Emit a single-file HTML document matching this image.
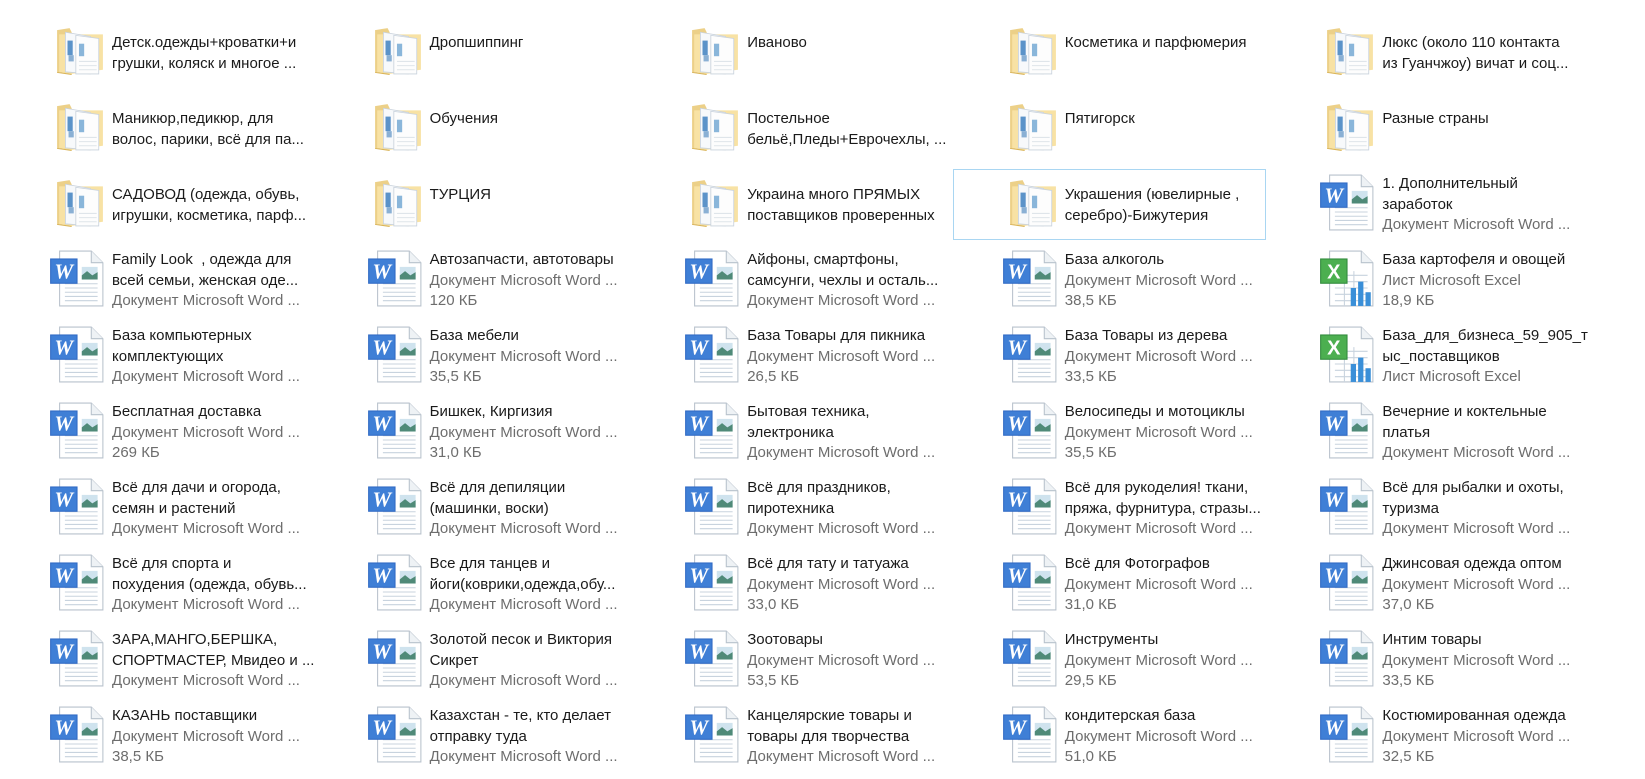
<!DOCTYPE html>
<html><head><meta charset="utf-8">
<style>
body{margin:0;width:1645px;height:779px;background:#fff;overflow:hidden;font-family:"Segoe UI","Liberation Sans","DejaVu Sans",sans-serif;font-size:15px;color:#1a1a1a}
.g{position:absolute;left:0;top:17px;display:grid;grid-template-columns:repeat(5,317.6px);grid-auto-rows:76px}
.c{position:relative}
.c svg{position:absolute}
.f svg{left:55px;top:9px}
.w svg{left:49px;top:5px}
.t{position:absolute;left:112px;line-height:20.5px;white-space:nowrap}
.f .t{top:16px}
.w .t{top:5px}
.s{color:#6d6d6d}
.sel{position:absolute;left:953px;top:169px;width:311px;height:69px;border:1px solid #a9d6f2;background:#fff}
</style></head><body>
<svg width="0" height="0" style="position:absolute">
<defs>
<symbol id="fo" viewBox="0 0 48 48">
<path d="M2 4 L14 2 L16 6 L16 46 L2 44 Z" fill="#ecd088"/>
<path d="M4 8 L46 8 L46 42 L16 46 L4 44 Z" fill="#f8e2a4"/>
<path d="M10 6 L34 10 L34 46 L10 44 Z" fill="#f7f9fb" stroke="#c9d2dc" stroke-width=".8"/>
<path d="M20 9 L42 12 L42 46 L20 46 Z" fill="#fdfdfd" stroke="#c9d2dc" stroke-width=".8"/>
<rect x="12" y="14" width="5" height="14" fill="#5b93c9"/>
<rect x="13" y="28" width="5" height="6" fill="#8ab0d4"/>
<rect x="23" y="17" width="5" height="12" fill="#8ab6da"/>
<path d="M23 34 L40 34 M23 38 L40 38 M23 42 L40 42" stroke="#dfe5ea" stroke-width="1"/>
<path d="M2 44 L16 46 L16 47 L2 45Z" fill="#d9b458"/>
</symbol>
<symbol id="wd" viewBox="0 0 52 54">
<path d="M10 1 L40 1 L51 12 L51 53 L10 53 Z" fill="#fff" stroke="#b8c2cc" stroke-width="1"/>
<path d="M40 1 L40 12 L51 12" fill="#eef2f5" stroke="#b8c2cc" stroke-width="1"/>
<path d="M15 32h31M15 36h31M15 40h31M15 44h31M15 48h31" stroke="#c8d3de" stroke-width="1"/>
<rect x="31" y="16" width="15" height="12" fill="#cfe3ee"/>
<path d="M31 24 L36 20 L41 24 L46 21 L46 28 L31 28Z" fill="#4f8a78"/>
<rect x="1" y="8" width="26" height="24" fill="#2f69c4"/>
<rect x="2" y="9" width="24" height="22" fill="#3f7fd6"/>
<text x="14" y="27" font-family="Liberation Serif" font-style="italic" font-weight="bold" font-size="20" fill="#fff" text-anchor="middle">W</text>
</symbol>
<symbol id="xl" viewBox="0 0 52 54">
<path d="M10 1 L40 1 L51 12 L51 53 L10 53 Z" fill="#fff" stroke="#b8c2cc" stroke-width="1"/>
<path d="M40 1 L40 12 L51 12" fill="#eef2f5" stroke="#b8c2cc" stroke-width="1"/>
<path d="M15 24h31M15 30h31M15 36h31M15 42h31M15 48h31M24 20v33M33 20v33" stroke="#c8d3de" stroke-width="1"/>
<rect x="30" y="36" width="5" height="17" fill="#3a8fd8"/>
<rect x="37" y="30" width="5" height="23" fill="#3a8fd8"/>
<rect x="44" y="40" width="5" height="13" fill="#3a8fd8"/>
<rect x="1" y="8" width="26" height="24" fill="#2f8a3b"/>
<rect x="2" y="9" width="24" height="22" fill="#4caf50"/>
<text x="14" y="27" font-family="Liberation Sans" font-weight="bold" font-size="19" fill="#fff" text-anchor="middle">X</text>
</symbol>
</defs></svg>
<div class="sel"></div>
<div class="g">
<div class="c f"><svg width="50" height="50"><use href="#fo"/></svg><div class="t">Детск.одежды+кроватки+и<br>грушки, коляск и многое ...</div></div>
<div class="c f"><svg width="50" height="50"><use href="#fo"/></svg><div class="t">Дропшиппинг</div></div>
<div class="c f"><svg width="50" height="50"><use href="#fo"/></svg><div class="t">Иваново</div></div>
<div class="c f"><svg width="50" height="50"><use href="#fo"/></svg><div class="t">Косметика и парфюмерия</div></div>
<div class="c f"><svg width="50" height="50"><use href="#fo"/></svg><div class="t">Люкс (около 110 контакта<br>из Гуанчжоу) вичат и соц...</div></div>

<div class="c f"><svg width="50" height="50"><use href="#fo"/></svg><div class="t">Маникюр,педикюр, для<br>волос, парики, всё для па...</div></div>
<div class="c f"><svg width="50" height="50"><use href="#fo"/></svg><div class="t">Обучения</div></div>
<div class="c f"><svg width="50" height="50"><use href="#fo"/></svg><div class="t">Постельное<br>бельё,Пледы+Еврочехлы, ...</div></div>
<div class="c f"><svg width="50" height="50"><use href="#fo"/></svg><div class="t">Пятигорск</div></div>
<div class="c f"><svg width="50" height="50"><use href="#fo"/></svg><div class="t">Разные страны</div></div>

<div class="c f"><svg width="50" height="50"><use href="#fo"/></svg><div class="t">САДОВОД (одежда, обувь,<br>игрушки, косметика, парф...</div></div>
<div class="c f"><svg width="50" height="50"><use href="#fo"/></svg><div class="t">ТУРЦИЯ</div></div>
<div class="c f"><svg width="50" height="50"><use href="#fo"/></svg><div class="t">Украина много ПРЯМЫХ<br>поставщиков проверенных</div></div>
<div class="c f"><svg width="50" height="50"><use href="#fo"/></svg><div class="t">Украшения (ювелирные ,<br>серебро)-Бижутерия</div></div>
<div class="c w"><svg width="55" height="57"><use href="#wd"/></svg><div class="t">1. Дополнительный<br>заработок<br><span class="s">Документ Microsoft Word ...</span></div></div>

<div class="c w"><svg width="55" height="57"><use href="#wd"/></svg><div class="t">Family Look&nbsp; , одежда для<br>всей семьи, женская оде...<br><span class="s">Документ Microsoft Word ...</span></div></div>
<div class="c w"><svg width="55" height="57"><use href="#wd"/></svg><div class="t">Автозапчасти, автотовары<br><span class="s">Документ Microsoft Word ...<br>120 КБ</span></div></div>
<div class="c w"><svg width="55" height="57"><use href="#wd"/></svg><div class="t">Айфоны, смартфоны,<br>самсунги, чехлы и осталь...<br><span class="s">Документ Microsoft Word ...</span></div></div>
<div class="c w"><svg width="55" height="57"><use href="#wd"/></svg><div class="t">База алкоголь<br><span class="s">Документ Microsoft Word ...<br>38,5 КБ</span></div></div>
<div class="c w"><svg width="55" height="57"><use href="#xl"/></svg><div class="t">База картофеля и овощей<br><span class="s">Лист Microsoft Excel<br>18,9 КБ</span></div></div>

<div class="c w"><svg width="55" height="57"><use href="#wd"/></svg><div class="t">База компьютерных<br>комплектующих<br><span class="s">Документ Microsoft Word ...</span></div></div>
<div class="c w"><svg width="55" height="57"><use href="#wd"/></svg><div class="t">База мебели<br><span class="s">Документ Microsoft Word ...<br>35,5 КБ</span></div></div>
<div class="c w"><svg width="55" height="57"><use href="#wd"/></svg><div class="t">База Товары для пикника<br><span class="s">Документ Microsoft Word ...<br>26,5 КБ</span></div></div>
<div class="c w"><svg width="55" height="57"><use href="#wd"/></svg><div class="t">База Товары из дерева<br><span class="s">Документ Microsoft Word ...<br>33,5 КБ</span></div></div>
<div class="c w"><svg width="55" height="57"><use href="#xl"/></svg><div class="t">База_для_бизнеса_59_905_т<br>ыс_поставщиков<br><span class="s">Лист Microsoft Excel</span></div></div>

<div class="c w"><svg width="55" height="57"><use href="#wd"/></svg><div class="t">Бесплатная доставка<br><span class="s">Документ Microsoft Word ...<br>269 КБ</span></div></div>
<div class="c w"><svg width="55" height="57"><use href="#wd"/></svg><div class="t">Бишкек, Киргизия<br><span class="s">Документ Microsoft Word ...<br>31,0 КБ</span></div></div>
<div class="c w"><svg width="55" height="57"><use href="#wd"/></svg><div class="t">Бытовая техника,<br>электроника<br><span class="s">Документ Microsoft Word ...</span></div></div>
<div class="c w"><svg width="55" height="57"><use href="#wd"/></svg><div class="t">Велосипеды и мотоциклы<br><span class="s">Документ Microsoft Word ...<br>35,5 КБ</span></div></div>
<div class="c w"><svg width="55" height="57"><use href="#wd"/></svg><div class="t">Вечерние и коктельные<br>платья<br><span class="s">Документ Microsoft Word ...</span></div></div>

<div class="c w"><svg width="55" height="57"><use href="#wd"/></svg><div class="t">Всё для дачи и огорода,<br>семян и растений<br><span class="s">Документ Microsoft Word ...</span></div></div>
<div class="c w"><svg width="55" height="57"><use href="#wd"/></svg><div class="t">Всё для депиляции<br>(машинки, воски)<br><span class="s">Документ Microsoft Word ...</span></div></div>
<div class="c w"><svg width="55" height="57"><use href="#wd"/></svg><div class="t">Всё для праздников,<br>пиротехника<br><span class="s">Документ Microsoft Word ...</span></div></div>
<div class="c w"><svg width="55" height="57"><use href="#wd"/></svg><div class="t">Всё для рукоделия! ткани,<br>пряжа, фурнитура, стразы...<br><span class="s">Документ Microsoft Word ...</span></div></div>
<div class="c w"><svg width="55" height="57"><use href="#wd"/></svg><div class="t">Всё для рыбалки и охоты,<br>туризма<br><span class="s">Документ Microsoft Word ...</span></div></div>

<div class="c w"><svg width="55" height="57"><use href="#wd"/></svg><div class="t">Всё для спорта и<br>похудения (одежда, обувь...<br><span class="s">Документ Microsoft Word ...</span></div></div>
<div class="c w"><svg width="55" height="57"><use href="#wd"/></svg><div class="t">Все для танцев и<br>йоги(коврики,одежда,обу...<br><span class="s">Документ Microsoft Word ...</span></div></div>
<div class="c w"><svg width="55" height="57"><use href="#wd"/></svg><div class="t">Всё для тату и татуажа<br><span class="s">Документ Microsoft Word ...<br>33,0 КБ</span></div></div>
<div class="c w"><svg width="55" height="57"><use href="#wd"/></svg><div class="t">Всё для Фотографов<br><span class="s">Документ Microsoft Word ...<br>31,0 КБ</span></div></div>
<div class="c w"><svg width="55" height="57"><use href="#wd"/></svg><div class="t">Джинсовая одежда оптом<br><span class="s">Документ Microsoft Word ...<br>37,0 КБ</span></div></div>

<div class="c w"><svg width="55" height="57"><use href="#wd"/></svg><div class="t">ЗАРА,МАНГО,БЕРШКА,<br>СПОРТМАСТЕР, Мвидео и ...<br><span class="s">Документ Microsoft Word ...</span></div></div>
<div class="c w"><svg width="55" height="57"><use href="#wd"/></svg><div class="t">Золотой песок и Виктория<br>Сикрет<br><span class="s">Документ Microsoft Word ...</span></div></div>
<div class="c w"><svg width="55" height="57"><use href="#wd"/></svg><div class="t">Зоотовары<br><span class="s">Документ Microsoft Word ...<br>53,5 КБ</span></div></div>
<div class="c w"><svg width="55" height="57"><use href="#wd"/></svg><div class="t">Инструменты<br><span class="s">Документ Microsoft Word ...<br>29,5 КБ</span></div></div>
<div class="c w"><svg width="55" height="57"><use href="#wd"/></svg><div class="t">Интим товары<br><span class="s">Документ Microsoft Word ...<br>33,5 КБ</span></div></div>

<div class="c w"><svg width="55" height="57"><use href="#wd"/></svg><div class="t">КАЗАНЬ поставщики<br><span class="s">Документ Microsoft Word ...<br>38,5 КБ</span></div></div>
<div class="c w"><svg width="55" height="57"><use href="#wd"/></svg><div class="t">Казахстан - те, кто делает<br>отправку туда<br><span class="s">Документ Microsoft Word ...</span></div></div>
<div class="c w"><svg width="55" height="57"><use href="#wd"/></svg><div class="t">Канцелярские товары и<br>товары для творчества<br><span class="s">Документ Microsoft Word ...</span></div></div>
<div class="c w"><svg width="55" height="57"><use href="#wd"/></svg><div class="t">кондитерская база<br><span class="s">Документ Microsoft Word ...<br>51,0 КБ</span></div></div>
<div class="c w"><svg width="55" height="57"><use href="#wd"/></svg><div class="t">Костюмированная одежда<br><span class="s">Документ Microsoft Word ...<br>32,5 КБ</span></div></div>
</div>
</body></html>
